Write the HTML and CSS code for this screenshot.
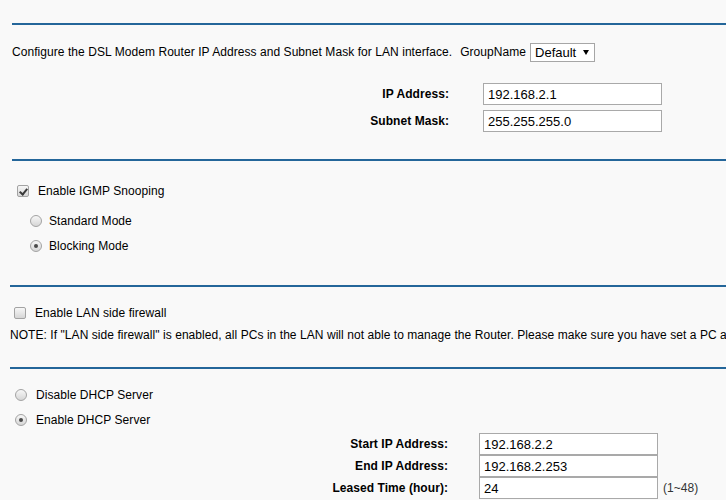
FILE: index.html
```html
<!DOCTYPE html>
<html lang="en">
<head>
    <meta charset="UTF-8">
    <meta name="viewport" content="width=device-width, initial-scale=1.0">
    <title>LAN Settings</title>
    <link rel="stylesheet" href="styles.css">
</head>
<body>
    <div class="page">

        <!-- LAN address -->
        <section class="block">
            <div class="rule"></div>
            <div class="intro">
                <span>Configure the DSL Modem Router IP Address and Subnet Mask for LAN interface.</span>
                <span class="group-label">GroupName</span>
                <span class="select-wrap">
                    <select class="group-select">
                        <option>Default</option>
                    </select>
                </span>
            </div>
            <div class="form form-lan">
                <label class="field-label" for="lan-ip">IP Address:</label>
                <input class="field" id="lan-ip" type="text" value="192.168.2.1">
                <label class="field-label" for="lan-mask">Subnet Mask:</label>
                <input class="field" id="lan-mask" type="text" value="255.255.255.0">
            </div>
        </section>

        <!-- IGMP -->
        <section class="block block-igmp">
            <div class="rule"></div>
            <label class="option option-first">
                <input class="check check-igmp" type="checkbox" checked>
                <span class="option-text">Enable IGMP Snooping</span>
            </label>
            <label class="option option-mode option-mode-first">
                <input class="radio radio-mode" type="radio" name="igmp-mode">
                <span class="option-text option-text-mode">Standard Mode</span>
            </label>
            <label class="option option-mode">
                <input class="radio radio-mode" type="radio" name="igmp-mode" checked>
                <span class="option-text option-text-mode">Blocking Mode</span>
            </label>
        </section>

        <!-- firewall -->
        <section class="block block-narrow block-firewall">
            <div class="rule"></div>
            <label class="option option-first">
                <input class="check check-firewall" type="checkbox">
                <span class="option-text">Enable LAN side firewall</span>
            </label>
            <p class="note">NOTE: If "LAN side firewall" is enabled, all PCs in the LAN will not able to manage the Router. Please make sure you have set a PC as the management host before you enable it.</p>
        </section>

        <!-- DHCP -->
        <section class="block block-narrow block-dhcp">
            <div class="rule"></div>
            <label class="option option-first">
                <input class="radio radio-dhcp" type="radio" name="dhcp">
                <span class="option-text">Disable DHCP Server</span>
            </label>
            <label class="option option-next">
                <input class="radio radio-dhcp" type="radio" name="dhcp" checked>
                <span class="option-text">Enable DHCP Server</span>
            </label>
            <div class="form form-dhcp">
                <label class="field-label" for="dhcp-start">Start IP Address:</label>
                <input class="field" id="dhcp-start" type="text" value="192.168.2.2">
                <span></span>
                <label class="field-label" for="dhcp-end">End IP Address:</label>
                <input class="field" id="dhcp-end" type="text" value="192.168.2.253">
                <span></span>
                <label class="field-label" for="dhcp-lease">Leased Time (hour):</label>
                <input class="field" id="dhcp-lease" type="text" value="24">
                <span class="hint">(1~48)</span>
            </div>
        </section>

    </div>
</body>
</html>
```

FILE: styles.css
```css
html, body {
    margin: 0;
    background-color: #f9f9f9;
}

body {
    font-family: "Liberation Sans", Arial, sans-serif;
    font-size: 12px;
    letter-spacing: 0.06px;
    color: #000;
}

.page {
    overflow: hidden;
    padding-top: 23px;
}

.block {
    padding-left: 12px;
}
.block-narrow {
    padding-left: 10px;
}
.block-igmp {
    margin-top: 27px;
}
.block-firewall {
    margin-top: 29px;
}
.block-dhcp {
    margin-top: 22px;
}

.rule {
    height: 2px;
    background-color: #24669a;
}

/* intro line with group select */
.intro {
    margin-top: 17px;
    height: 20px;
    display: flex;
    align-items: center;
    white-space: nowrap;
}
.group-label {
    margin-left: 8px;
}
.select-wrap {
    position: relative;
    margin-left: 4px;
    display: inline-flex;
}
.select-wrap::after {
    content: "";
    position: absolute;
    right: 6px;
    top: 7px;
    border-left: 3px solid transparent;
    border-right: 3px solid transparent;
    border-top: 5px solid #000;
    pointer-events: none;
}
.group-select {
    appearance: none;
    -webkit-appearance: none;
    width: 65px;
    height: 19px;
    box-sizing: border-box;
    margin: 0;
    padding: 0 0 0 4px;
    border: 1px solid #a6a6a6;
    border-radius: 0;
    background-color: #fff;
    font-family: "Liberation Sans", Arial, sans-serif;
    font-size: 13px;
    color: #000;
}

/* label / input tables */
.form {
    display: grid;
    grid-auto-rows: 22px;
    align-items: center;
}
.form-lan {
    margin-top: 21px;
    grid-template-columns: 437px 179px;
    column-gap: 34px;
    row-gap: 5px;
}
.form-dhcp {
    margin-top: 3px;
    grid-template-columns: 438px 179px auto;
    column-gap: 31px;
}
.form-dhcp .hint {
    margin-left: -26px;
    color: #333;
}
.field-label {
    font-weight: bold;
    text-align: right;
    white-space: nowrap;
}
.field {
    width: 179px;
    height: 22px;
    box-sizing: border-box;
    margin: 0;
    padding: 0 4px;
    border: 1px solid #a9a9a9;
    border-radius: 0;
    background-color: #fff;
    font-family: "Liberation Sans", Arial, sans-serif;
    font-size: 13px;
    color: #000;
    outline: none;
}

/* checkbox / radio rows */
.option {
    display: flex;
    align-items: center;
    height: 20px;
    white-space: nowrap;
}
.option-first {
    margin-top: 20px;
}
.block-firewall .option-first,
.block-dhcp .option-first {
    margin-top: 16px;
}
.option-mode-first {
    margin-top: 10px;
}
.option-mode + .option-mode,
.option-next {
    margin-top: 5px;
}
.option-text {
    margin-left: 9px;
}
.option-text-mode {
    margin-left: 7px;
}

.check,
.radio {
    appearance: none;
    -webkit-appearance: none;
    position: relative;
    width: 12px;
    height: 12px;
    box-sizing: border-box;
    margin: 0;
    flex: none;
    border: 1px solid #a3a3a3;
    background: linear-gradient(#f7f7f7, #d6d6d6);
}
.check {
    border-radius: 2px;
}
.check:checked::after {
    content: "";
    position: absolute;
    left: 3px;
    top: 1px;
    width: 3px;
    height: 6px;
    border: solid #3a3a3a;
    border-width: 0 2px 2px 0;
    transform: rotate(40deg);
}
.radio {
    border-radius: 50%;
}
.radio:checked::after {
    content: "";
    position: absolute;
    left: 3px;
    top: 3px;
    width: 4px;
    height: 4px;
    border-radius: 50%;
    background-color: #4a4a4a;
}

.check-igmp {
    margin-left: 5px;
}
.radio-mode {
    margin-left: 18px;
}
.check-firewall {
    margin-left: 4px;
}
.radio-dhcp {
    margin-left: 5px;
}

.note {
    margin: 2px 0 0 0;
    height: 20px;
    line-height: 20px;
    white-space: nowrap;
}
```
